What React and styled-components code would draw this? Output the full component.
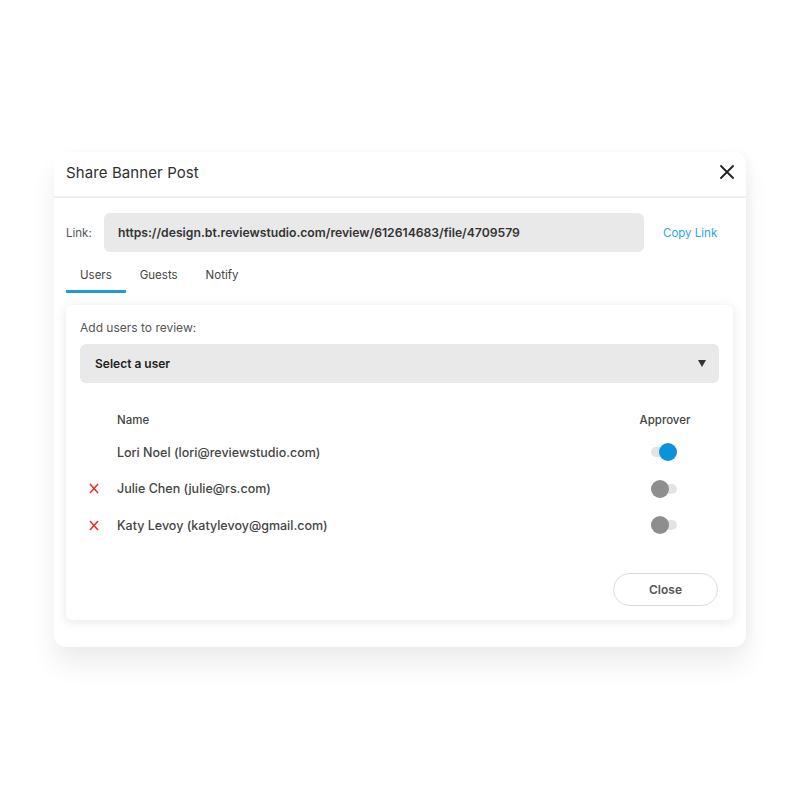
import React from "react";
import styled, { createGlobalStyle } from "styled-components";

const Global = createGlobalStyle`
  html, body { margin: 0; padding: 0; background: #ffffff; }
  body { font-family: "Inter", "Open Sans", sans-serif; }
  * { box-sizing: border-box; }
`;

const Page = styled.div`
  width: 800px;
  height: 800px;
  padding: 152px 0 0 54px;
`;

const Dialog = styled.div`
  width: 692px;
  background: #ffffff;
  border-radius: 12px;
  box-shadow: 0 18px 26px rgba(0, 0, 0, 0.07), 4px 0 10px rgba(0, 0, 0, 0.03);
  padding-bottom: 27px;
`;

const Header = styled.div`
  height: 46px;
  display: flex;
  align-items: center;
  justify-content: space-between;
  padding: 0 12px 4px 12px;
  border-bottom: 2px solid #efefef;
`;

const Title = styled.div`
  font-size: 15px;
  color: #2f2f2f;
  letter-spacing: 0.1px;
`;

const CloseIcon = styled.button`
  border: 0;
  background: none;
  padding: 0;
  width: 14px;
  height: 14px;
  display: flex;
  cursor: pointer;
`;

const LinkRow = styled.div`
  display: flex;
  align-items: center;
  padding: 15px 12px 0 12px;
`;

const Label = styled.span`
  width: 38px;
  font-size: 11.5px;
  color: #555;
`;

const LinkBox = styled.div`
  width: 540px;
  height: 39px;
  background: #e9e9e9;
  border-radius: 6px;
  display: flex;
  align-items: center;
  padding-left: 14px;
  font-size: 12.2px;
  font-weight: 600;
  color: #333;
`;

const CopyLink = styled.a`
  margin-left: 19px;
  font-size: 11.5px;
  color: #2aa6e4;
`;

const Tabs = styled.div`
  display: flex;
  padding: 16px 12px 0 12px;
`;

const Tab = styled.div`
  padding: 0 ${(p) => p.$pr}px 8px ${(p) => p.$pl}px;
  font-size: 11.5px;
  color: #444;
  border-bottom: 3px solid ${(p) => (p.$active ? "#1e9ad8" : "transparent")};
  border-radius: 1px;
`;

const Card = styled.div`
  margin: 12px 13px 0 12px;
  background: #fff;
  border-radius: 6px;
  box-shadow: 0 2px 12px rgba(0, 0, 0, 0.1);
  padding: 15px 14px 14px 14px;
`;

const SubLabel = styled.div`
  font-size: 12px;
  color: #555;
`;

const Select = styled.div`
  margin-top: 9px;
  height: 39px;
  background: #e9e9e9;
  border-radius: 6px;
  display: flex;
  align-items: center;
  justify-content: space-between;
  padding: 0 13px 0 15px;
  font-size: 12px;
  font-weight: 600;
  color: #222;
`;

const Caret = styled.span`
  width: 0;
  height: 0;
  border-left: 4px solid transparent;
  border-right: 4px solid transparent;
  border-top: 7px solid #333;
`;

const Table = styled.div`
  margin-top: 24px;
  display: flex;
  flex-direction: column;
`;

const Row = styled.div`
  display: grid;
  grid-template-columns: 37px 1fr 90px;
  align-items: center;
  height: ${(p) => (p.$head ? 26 : 36.5)}px;
  margin-bottom: ${(p) => (p.$head ? 1 : 0)}px;
`;

const XMark = styled.span`
  display: flex;
  justify-content: center;
  padding-right: 10px;
`;

const Cell = styled.div`
  font-size: 12.5px;
  font-weight: 500;
  color: #444;
`;

const HeadCell = styled.div`
  font-size: 11.5px;
  font-weight: 500;
  color: #444;
  text-align: ${(p) => p.$align || "left"};
  padding-right: ${(p) => (p.$align ? 18 : 0)}px;
`;

const ToggleCell = styled.div`
  display: flex;
  justify-content: center;
  padding-right: 20px;
`;

const Track = styled.div`
  position: relative;
  width: 26px;
  height: 10px;
  border-radius: 5px;
  background: #e3e3e3;
`;

const Knob = styled.div`
  position: absolute;
  top: -4px;
  left: ${(p) => (p.$on ? 8 : 0)}px;
  width: 18px;
  height: 18px;
  border-radius: 50%;
  background: ${(p) => (p.$on ? "#0a93da" : "#8e8e8e")};
`;

const Footer = styled.div`
  display: flex;
  justify-content: flex-end;
  margin-top: 29px;
  padding-right: 1px;
`;

const CloseButton = styled.button`
  width: 105px;
  height: 33px;
  border: 1px solid #dcdcdc;
  border-radius: 17px;
  background: #fff;
  font-family: inherit;
  font-size: 12px;
  font-weight: 600;
  color: #555;
`;

const users = [
  { name: "Lori Noel (lori@reviewstudio.com)", removable: false, on: true },
  { name: "Julie Chen (julie@rs.com)", removable: true, on: false },
  { name: "Katy Levoy (katylevoy@gmail.com)", removable: true, on: false },
];

export default function App() {
  return (
    <Page>
      <Global />
      <Dialog>
        <Header>
          <Title>Share Banner Post</Title>
          <CloseIcon aria-label="close">
            <svg width="14" height="14" viewBox="0 0 14 14">
              <path d="M1 1L13 13M13 1L1 13" stroke="#222" strokeWidth="1.8" strokeLinecap="round" />
            </svg>
          </CloseIcon>
        </Header>
        <LinkRow>
          <Label>Link:</Label>
          <LinkBox>https://design.bt.reviewstudio.com/review/612614683/file/4709579</LinkBox>
          <CopyLink>Copy Link</CopyLink>
        </LinkRow>
        <Tabs>
          <Tab $active $pl={14} $pr={14}>Users</Tab>
          <Tab $pl={14} $pr={14}>Guests</Tab>
          <Tab $pl={14} $pr={14}>Notify</Tab>
        </Tabs>
        <Card>
          <SubLabel>Add users to review:</SubLabel>
          <Select>
            <span>Select a user</span>
            <Caret />
          </Select>
          <Table>
            <Row $head>
              <span />
              <HeadCell>Name</HeadCell>
              <HeadCell $align="center">Approver</HeadCell>
            </Row>
            {users.map((u) => (
              <Row key={u.name}>
                <XMark>
                  {u.removable && (
                    <svg width="10" height="11" viewBox="0 0 10 11">
                      <path d="M1 1L9 10M9 1L1 10" stroke="#ee2a2a" strokeWidth="1.5" />
                    </svg>
                  )}
                </XMark>
                <Cell>{u.name}</Cell>
                <ToggleCell>
                  <Track>
                    <Knob $on={u.on} />
                  </Track>
                </ToggleCell>
              </Row>
            ))}
          </Table>
          <Footer>
            <CloseButton>Close</CloseButton>
          </Footer>
        </Card>
      </Dialog>
    </Page>
  );
}
